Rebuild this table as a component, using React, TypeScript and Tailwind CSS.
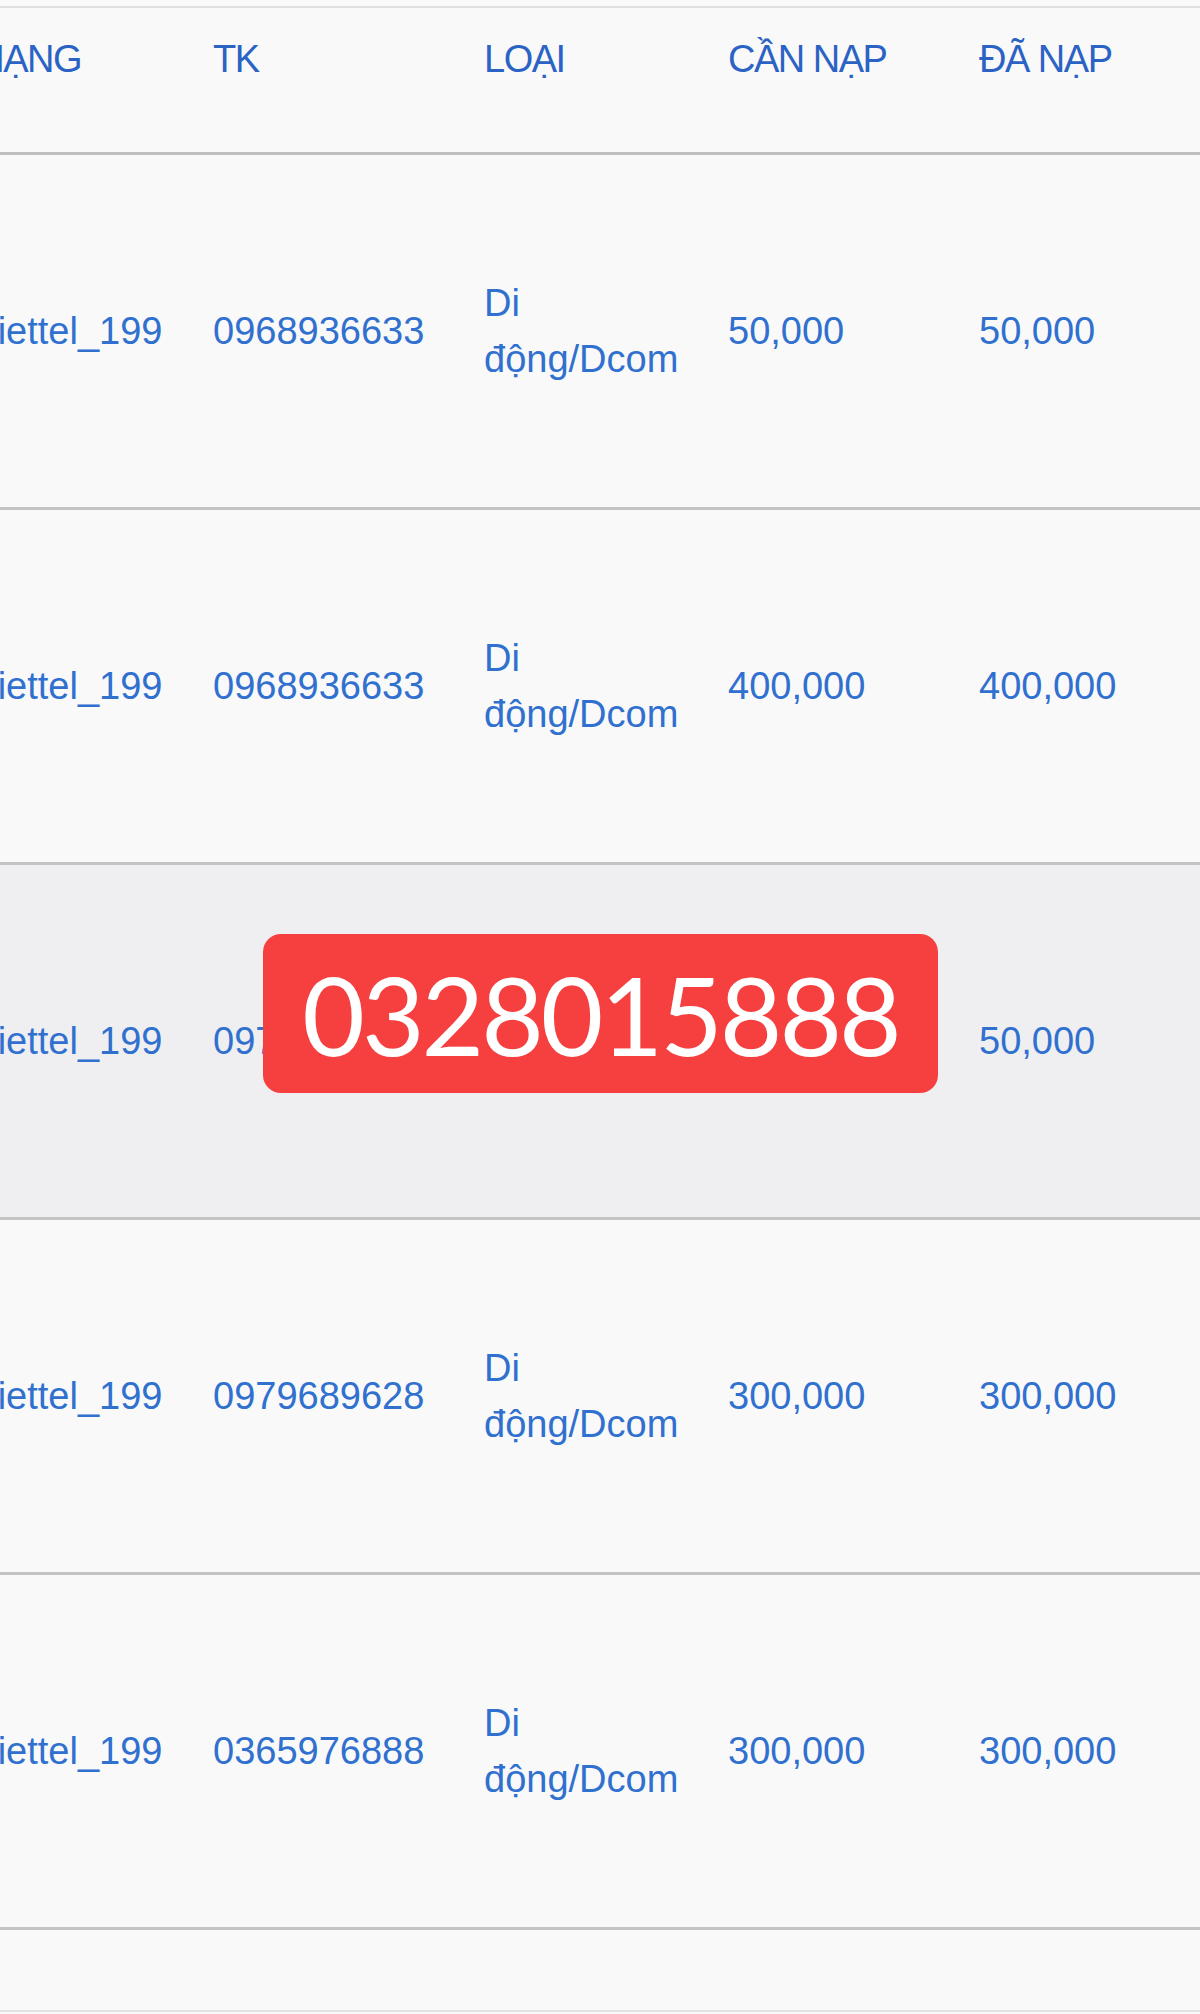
import React from 'react';

type Row = {
  net: string;
  tk: string;
  type: string;
  need: string;
  done: string;
  highlight?: boolean;
};

const rows: Row[] = [
  { net: 'Viettel_199', tk: '0968936633', type: 'Di động/Dcom', need: '50,000', done: '50,000' },
  { net: 'Viettel_199', tk: '0968936633', type: 'Di động/Dcom', need: '400,000', done: '400,000' },
  { net: 'Viettel_199', tk: '0975386633', type: 'Di động/Dcom', need: '50,000', done: '50,000', highlight: true },
  { net: 'Viettel_199', tk: '0979689628', type: 'Di động/Dcom', need: '300,000', done: '300,000' },
  { net: 'Viettel_199', tk: '0365976888', type: 'Di động/Dcom', need: '300,000', done: '300,000' },
];

const cols = 'grid grid-cols-[240px_271px_244px_251px_1fr] -ml-[27px] w-[1227px]';

export default function App() {
  return (
    <div className="h-[2014px] w-[1200px] overflow-hidden bg-[#f9f9f9] font-['Liberation_Sans',Arial,sans-serif] text-[38px] leading-[56px] text-[#3070cf]">
      {/* top edge */}
      <div className="h-[8px] border-b-2 border-[#e0e0e0]" />

      {/* Header */}
      <div className="h-[147px] border-b-[3px] border-[#bfbfbf] pt-[24px]">
        <div className={`${cols} text-[38px] leading-[54px] tracking-[-1.5px] text-[#2a63c4]`}>
          <div>MẠNG</div>
          <div>TK</div>
          <div>LOẠI</div>
          <div>CẦN NẠP</div>
          <div>ĐÃ NẠP</div>
        </div>
      </div>

      {/* Rows */}
      {rows.map((r, i) => (
        <div
          key={i}
          className={`relative h-[355px] border-b-[3px] border-[#c4c4c4] ${r.highlight ? 'bg-[#efeff1]' : ''}`}
        >
          <div className={`${cols} h-full items-center`}>
            <div>{r.net}</div>
            <div>{r.tk}</div>
            <div className="pr-[40px]">{r.type}</div>
            <div>{r.need}</div>
            <div>{r.done}</div>
          </div>

          {r.highlight && (
            <div className="absolute left-[263px] top-[69px] flex h-[159px] w-[675px] items-center justify-center rounded-[18px] bg-[#f6403f] font-['Lato',sans-serif] text-[108px] leading-none tracking-[-3px] text-white">
              0328015888
            </div>
          )}
        </div>
      ))}

      {/* trailing empty row */}
      <div className="h-[82px] border-b-2 border-[#e2e2e2]" />
    </div>
  );
}
